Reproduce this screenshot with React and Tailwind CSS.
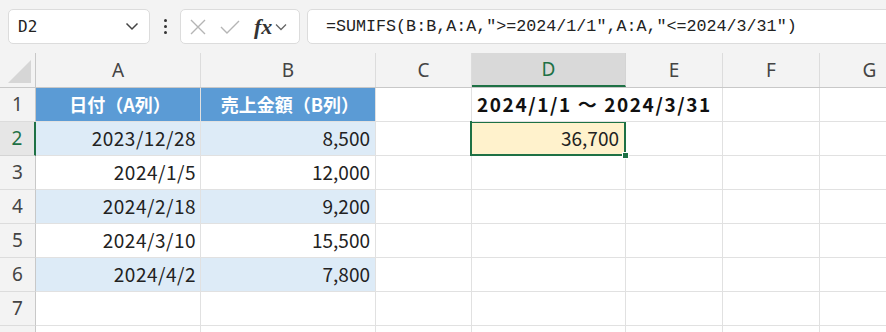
import React from 'react'

const COLS = [
  { key: 'A', w: 'w-[165px]' },
  { key: 'B', w: 'w-[175px]' },
  { key: 'C', w: 'w-[96px]' },
  { key: 'D', w: 'w-[154px]' },
  { key: 'E', w: 'w-[97px]' },
  { key: 'F', w: 'w-[97px]' },
  { key: 'G', w: 'w-[100px]' },
]

const DATA = [
  ['2023/12/28', '8,500'],
  ['2024/1/5', '12,000'],
  ['2024/2/18', '9,200'],
  ['2024/3/10', '15,500'],
  ['2024/4/2', '7,800'],
]

const cellFont = { fontFamily: '"Noto Sans CJK JP", "Noto Sans", sans-serif' }

// Formula bar
function FormulaBar() {
  return (
    <div className="h-[53px] bg-[#f3f3f3] flex items-center pl-[8px]">
      <div className="w-[142px] h-[35px] bg-white border border-[#dcdcdc] rounded-[5px] flex items-center justify-between pl-[9px] pr-[10px]">
        <span className="text-[16px] text-[#222]" style={{ fontFamily: '"DejaVu Sans Mono", monospace' }}>D2</span>
        <svg width="14" height="9" viewBox="0 0 14 9" fill="none" stroke="#444" strokeWidth="1.5">
          <path d="M1.5 1.5 L7 7 L12.5 1.5" />
        </svg>
      </div>
      <div className="w-[30px] flex flex-col items-center gap-[3px]">
        <span className="w-[3px] h-[3px] rounded-full bg-[#333]" />
        <span className="w-[3px] h-[3px] rounded-full bg-[#333]" />
        <span className="w-[3px] h-[3px] rounded-full bg-[#333]" />
      </div>
      <div className="w-[120px] h-[35px] bg-white border border-[#dcdcdc] rounded-[5px] flex items-center pl-[8px]">
        <svg width="18" height="18" viewBox="0 0 18 18" fill="none" stroke="#b5b5b5" strokeWidth="1.4">
          <path d="M2 2 L16 16 M16 2 L2 16" />
        </svg>
        <svg className="ml-[13px]" width="20" height="16" viewBox="0 0 20 16" fill="none" stroke="#b5b5b5" strokeWidth="1.4">
          <path d="M1 8 L7 14 L19 2" />
        </svg>
        <span className="ml-[14px] text-[22px] italic font-bold text-[#333] leading-none" style={{ fontFamily: '"Liberation Serif", serif' }}>fx</span>
        <svg className="ml-[3px]" width="12" height="8" viewBox="0 0 12 8" fill="none" stroke="#666" strokeWidth="1.3">
          <path d="M1 1.5 L6 6.5 L11 1.5" />
        </svg>
      </div>
      <div className="ml-[7px] flex-1 -mr-[20px] h-[35px] bg-white border border-[#dcdcdc] rounded-[5px] flex items-center pl-[18px]">
        <span className="text-[16.7px] text-[#222] whitespace-nowrap" style={{ fontFamily: '"Liberation Mono", monospace' }}>
          =SUMIFS(B:B,A:A,"&gt;=2024/1/1",A:A,"&lt;=2024/3/31")
        </span>
      </div>
    </div>
  )
}

// Column header row
function HeaderRow() {
  return (
    <div className="flex h-[35px] border-b border-[#c8c8c8] bg-[#f3f3f3]">
      <div className="w-[36px] shrink-0 border-r border-[#c8c8c8] relative">
        <svg className="absolute left-0 top-0" width="36" height="35" viewBox="0 0 36 35">
          <polygon points="8,30 31,30 31,7" fill="#d6d6d6" />
        </svg>
      </div>
      {COLS.map(c => (
        c.key === 'D' ? (
          <div key={c.key} className={`${c.w} shrink-0 bg-[#d9d9d9] border-b-2 border-[#1e7145] border-r border-r-[#d4d4d4] flex items-center justify-center text-[19px] text-[#1e7145]`} style={{ fontFamily: '"Noto Sans", sans-serif' }}>
            {c.key}
          </div>
        ) : (
          <div key={c.key} className={`${c.w} shrink-0 border-r border-[#dcdcdc] flex items-center justify-center text-[19px] text-[#444]`} style={{ fontFamily: '"Noto Sans", sans-serif' }}>
            {c.key}
          </div>
        )
      ))}
    </div>
  )
}

function RowHead({ n, active }) {
  return active ? (
    <div className="w-[36px] shrink-0 bg-[#e6e6e6] border-r-2 border-[#1e7145] border-b border-b-[#d4d4d4] flex items-center justify-center text-[19px] text-[#1e7145]" style={{ fontFamily: '"Noto Sans", sans-serif' }}>
      {n}
    </div>
  ) : (
    <div className="w-[36px] shrink-0 bg-[#f3f3f3] border-r border-[#c8c8c8] border-b border-b-[#dcdcdc] flex items-center justify-center text-[19px] text-[#444]" style={{ fontFamily: '"Noto Sans", sans-serif' }}>
      {n}
    </div>
  )
}

function Cell({ w, className = '', children }) {
  return (
    <div className={`${w} shrink-0 border-r border-b border-[#e1e1e1] flex items-center ${className}`} style={cellFont}>
      {children}
    </div>
  )
}

export default function App() {
  return (
    <div className="w-[886px] h-[332px] overflow-hidden bg-white">
      <FormulaBar />
      <HeaderRow />

      {/* Row 1 */}
      <div className="flex h-[34px]">
        <RowHead n={1} />
        <Cell w="w-[165px]" className="bg-[#5b9bd5] border-[#5b9bd5] justify-center pl-[4px] text-white font-bold text-[18px]">日付（A列）</Cell>
        <Cell w="w-[175px]" className="bg-[#5b9bd5] border-[#5b9bd5] justify-center pl-[4px] text-white font-bold text-[18px]">売上金額（B列）</Cell>
        <Cell w="w-[96px]" />
        <div className="w-[154px] shrink-0 border-b border-[#e1e1e1] flex items-center pl-[5px] overflow-visible relative z-10" style={cellFont}>
          <span className="whitespace-nowrap font-bold text-[19px] text-[#111] tracking-[1.6px]">2024/1/1 〜 2024/3/31</span>
        </div>
        <Cell w="w-[97px]" />
        <Cell w="w-[97px]" />
        <Cell w="w-[100px]" />
      </div>

      {DATA.map((r, i) => {
        const blue = i % 2 === 0
        const bg = blue ? 'bg-[#ddebf7]' : 'bg-white'
        return (
          <div key={i} className="flex h-[34px]">
            <RowHead n={i + 2} active={i === 0} />
            <Cell w="w-[165px]" className={`${bg} justify-end pr-[4px] text-[19px] text-[#222] tracking-[0.5px]`}>{r[0]}</Cell>
            <Cell w="w-[175px]" className={`${bg} justify-end pr-[5px] text-[19px] text-[#222]`}>{r[1]}</Cell>
            <Cell w="w-[96px]" />
            {i === 0 ? (
              <div className="w-[154px] shrink-0 bg-[#fff2cc] border-r border-b border-[#e1e1e1] flex items-center justify-end pr-[6px] relative text-[19px] text-[#222]" style={cellFont}>
                36,700
                <div className="absolute -left-[2px] -top-[1px] -right-[1px] -bottom-[1px] border-2 border-[#1e7145]" />
                <div className="absolute -right-[4px] -bottom-[4px] w-[7px] h-[7px] bg-[#1e7145] border border-white" />
              </div>
            ) : (
              <Cell w="w-[154px]" />
            )}
            <Cell w="w-[97px]" />
            <Cell w="w-[97px]" />
            <Cell w="w-[100px]" />
          </div>
        )
      })}

      <div className="flex h-[34px]">
        <RowHead n={7} />
        {COLS.map(c => <Cell key={c.key} w={c.w} />)}
      </div>
      <div className="flex h-[34px]">
        <RowHead n="" />
        {COLS.map(c => <Cell key={c.key} w={c.w} />)}
      </div>
    </div>
  )
}
